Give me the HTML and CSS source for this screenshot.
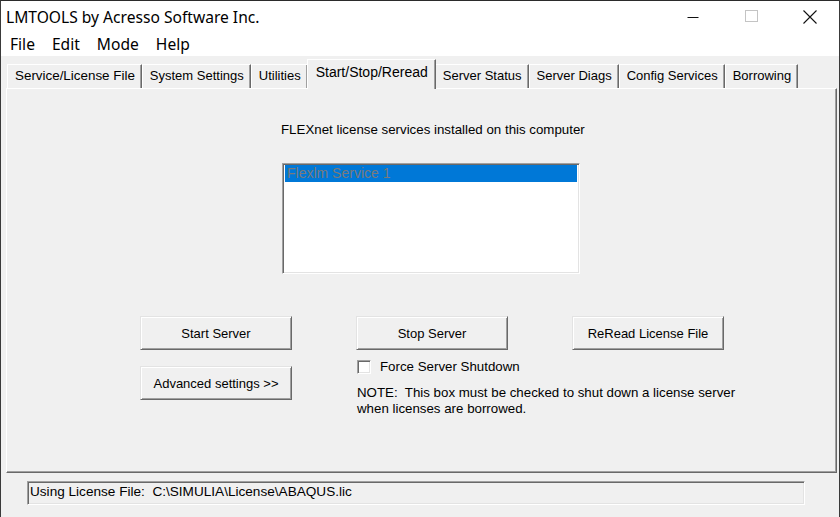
FILE: index.html
```html
<!DOCTYPE html>
<html>
<head>
<meta charset="utf-8">
<title>LMTOOLS</title>
<link rel="stylesheet" href="styles.css">
</head>
<body>
<div class="window">
  <div class="titlebar">
    <span class="title">LMTOOLS by Acresso Software Inc.</span>
    <div class="controls">
      <span class="ctl"><svg width="12" height="12" viewBox="0 0 12 12"><line x1="0.5" y1="6.5" x2="11.5" y2="6.5" stroke="#111" stroke-width="1"/></svg></span>
      <span class="ctl"><svg width="13" height="13" viewBox="0 0 13 13"><rect x="0.5" y="0.5" width="12" height="11" fill="none" stroke="#c4c4c4" stroke-width="1"/></svg></span>
      <span class="ctl"><svg width="14" height="14" viewBox="0 0 14 14"><path d="M0.5 0.5 L13.5 13.5 M13.5 0.5 L0.5 13.5" stroke="#111" stroke-width="1.1" fill="none"/></svg></span>
    </div>
  </div>
  <div class="menubar">
    <span class="menu">File</span>
    <span class="menu">Edit</span>
    <span class="menu">Mode</span>
    <span class="menu">Help</span>
  </div>
  <div class="client">
    <div class="tabs">
      <div class="tab first">Service/License File</div>
      <div class="tab">System Settings</div>
      <div class="tab">Utilities</div>
      <div class="tab active">Start/Stop/Reread</div>
      <div class="tab">Server Status</div>
      <div class="tab">Server Diags</div>
      <div class="tab">Config Services</div>
      <div class="tab">Borrowing</div>
    </div>
    <div class="panel">
      <div class="services">
        <p class="label">FLEXnet license services installed on this computer</p>
        <div class="listbox">
          <div class="item selected">Flexlm Service 1</div>
        </div>
      </div>
      <div class="actions">
        <div class="col">
          <button class="btn">Start Server</button>
          <button class="btn">Advanced settings &gt;&gt;</button>
        </div>
        <div class="col">
          <button class="btn">Stop Server</button>
          <div class="check"><span class="box"></span><span>Force Server Shutdown</span></div>
          <p class="note">NOTE:&nbsp; This box must be checked to shut down a license server<br>when licenses are borrowed.</p>
        </div>
        <div class="col">
          <button class="btn">ReRead License File</button>
        </div>
      </div>
    </div>
    <div class="status">Using License File:&nbsp; C:\SIMULIA\License\ABAQUS.lic</div>
  </div>
</div>
</body>
</html>
```

FILE: styles.css
```css
* { box-sizing: border-box; }
html, body {
  margin: 0;
  padding: 0;
  width: 840px;
  height: 517px;
  overflow: hidden;
  background: #f0f0f0;
}
.window {
  width: 840px;
  height: 517px;
  border-top: 1px solid #2b2b2b;
  border-left: 1px solid #3a3a3a;
  border-right: 1px solid #3a3a3a;
  background: #f0f0f0;
  display: flex;
  flex-direction: column;
  font-family: "Liberation Sans", Arial, sans-serif;
  font-size: 13.3px;
  color: #000;
}
.titlebar {
  height: 31px;
  background: #fff;
  display: flex;
  align-items: center;
  justify-content: space-between;
}
.title {
  font-family: "Noto Sans", "Open Sans", sans-serif;
  font-size: 15.6px;
  padding-left: 5px;
  color: #000;
}
.controls {
  display: flex;
  height: 31px;
}
.ctl {
  width: 58.5px;
  height: 31px;
  display: flex;
  align-items: center;
  justify-content: center;
}
.menubar {
  height: 24px;
  background: #fff;
  display: flex;
  align-items: center;
  gap: 17px;
  padding-left: 9px;
  font-family: "Noto Sans", "Open Sans", sans-serif;
  font-size: 15.6px;
}
.client {
  flex: 1;
  display: flex;
  flex-direction: column;
}
.tabs {
  height: 32px;
  display: flex;
  align-items: flex-end;
  padding-left: 6px;
  font-size: 13px;
}
.tab {
  height: 24px;
  line-height: 22px;
  padding: 0 6px 0 7px;
  border-top: 1px solid #fff;
  border-left: 1px solid #fff;
  border-right: 1px solid #696969;
  box-shadow: inset -1px 0 #a0a0a0;
  white-space: nowrap;
  background: #f0f0f0;
}
.tab.first {
  font-size: 13.4px;
}
.tab.active {
  position: relative;
  z-index: 1;
  height: 30px;
  margin: 0 -1px -1px -1px;
  line-height: 24px;
  padding: 0 7px 0 8px;
  font-size: 14px;
  border-top: 1px solid #fff;
}
.panel {
  margin-left: 5px;
  width: 831px;
  height: 385px;
  border-top: 1px solid #fff;
  border-left: 1px solid #fff;
  border-right: 1px solid #696969;
  border-bottom: 1px solid #696969;
  box-shadow: inset -1px -1px #a0a0a0;
}
.services {
  margin-left: 274px;
}
.label {
  margin: 33px 0 0 0;
  line-height: 16px;
}
.listbox {
  margin-top: 25px;
  margin-left: 1px;
  width: 298px;
  height: 111px;
  background: #fff;
  border-top: 1px solid #a0a0a0;
  border-left: 1px solid #a0a0a0;
  border-right: 1px solid #fff;
  border-bottom: 1px solid #fff;
  box-shadow: inset 1px 1px #696969, inset -1px -1px #e3e3e3;
  padding: 1px 2px 2px 2px;
}
.item {
  height: 17px;
  line-height: 17px;
  padding-left: 2px;
  font-size: 14px;
}
.item.selected {
  background: #0078d7;
  color: #7a7a7a;
}
.actions {
  margin-top: 42px;
  padding-left: 133px;
  display: grid;
  grid-template-columns: 152px 152px 152px;
  column-gap: 64px;
}
.col {
  display: flex;
  flex-direction: column;
  align-items: flex-start;
}
.btn {
  width: 152px;
  height: 34px;
  margin: 0 0 16px 0;
  padding: 0;
  font-family: "Liberation Sans", Arial, sans-serif;
  font-size: 13px;
  color: #000;
  background: #f0f0f0;
  border: 1px solid;
  border-color: #e3e3e3 #696969 #696969 #e3e3e3;
  box-shadow: inset 1px 1px #fff, inset -1px -1px #a0a0a0;
  border-radius: 0;
}
.col .btn:last-child { margin-bottom: 0; }
.col .btn + .check { margin-top: -7px; }
.check {
  display: flex;
  align-items: center;
  gap: 9px;
  height: 15px;
  margin-left: 1px;
  white-space: nowrap;
}
.box {
  width: 14px;
  height: 14px;
  background: #fff;
  border-top: 1px solid #a0a0a0;
  border-left: 1px solid #a0a0a0;
  border-right: 1px solid #fff;
  border-bottom: 1px solid #fff;
  box-shadow: inset 1px 1px #696969, inset -1px -1px #e3e3e3;
}
.note {
  margin: 11px 0 0 1px;
  line-height: 16px;
  white-space: nowrap;
}
.status {
  margin: 8px 0 0 26px;
  width: 778px;
  height: 24px;
  line-height: 20px;
  padding-left: 2px;
  font-size: 13.6px;
  border-top: 1px solid #a0a0a0;
  border-left: 1px solid #a0a0a0;
  border-right: 1px solid #fff;
  border-bottom: 1px solid #fff;
  box-shadow: inset 1px 1px #696969, inset -1px -1px #e3e3e3;
  white-space: nowrap;
}
```
